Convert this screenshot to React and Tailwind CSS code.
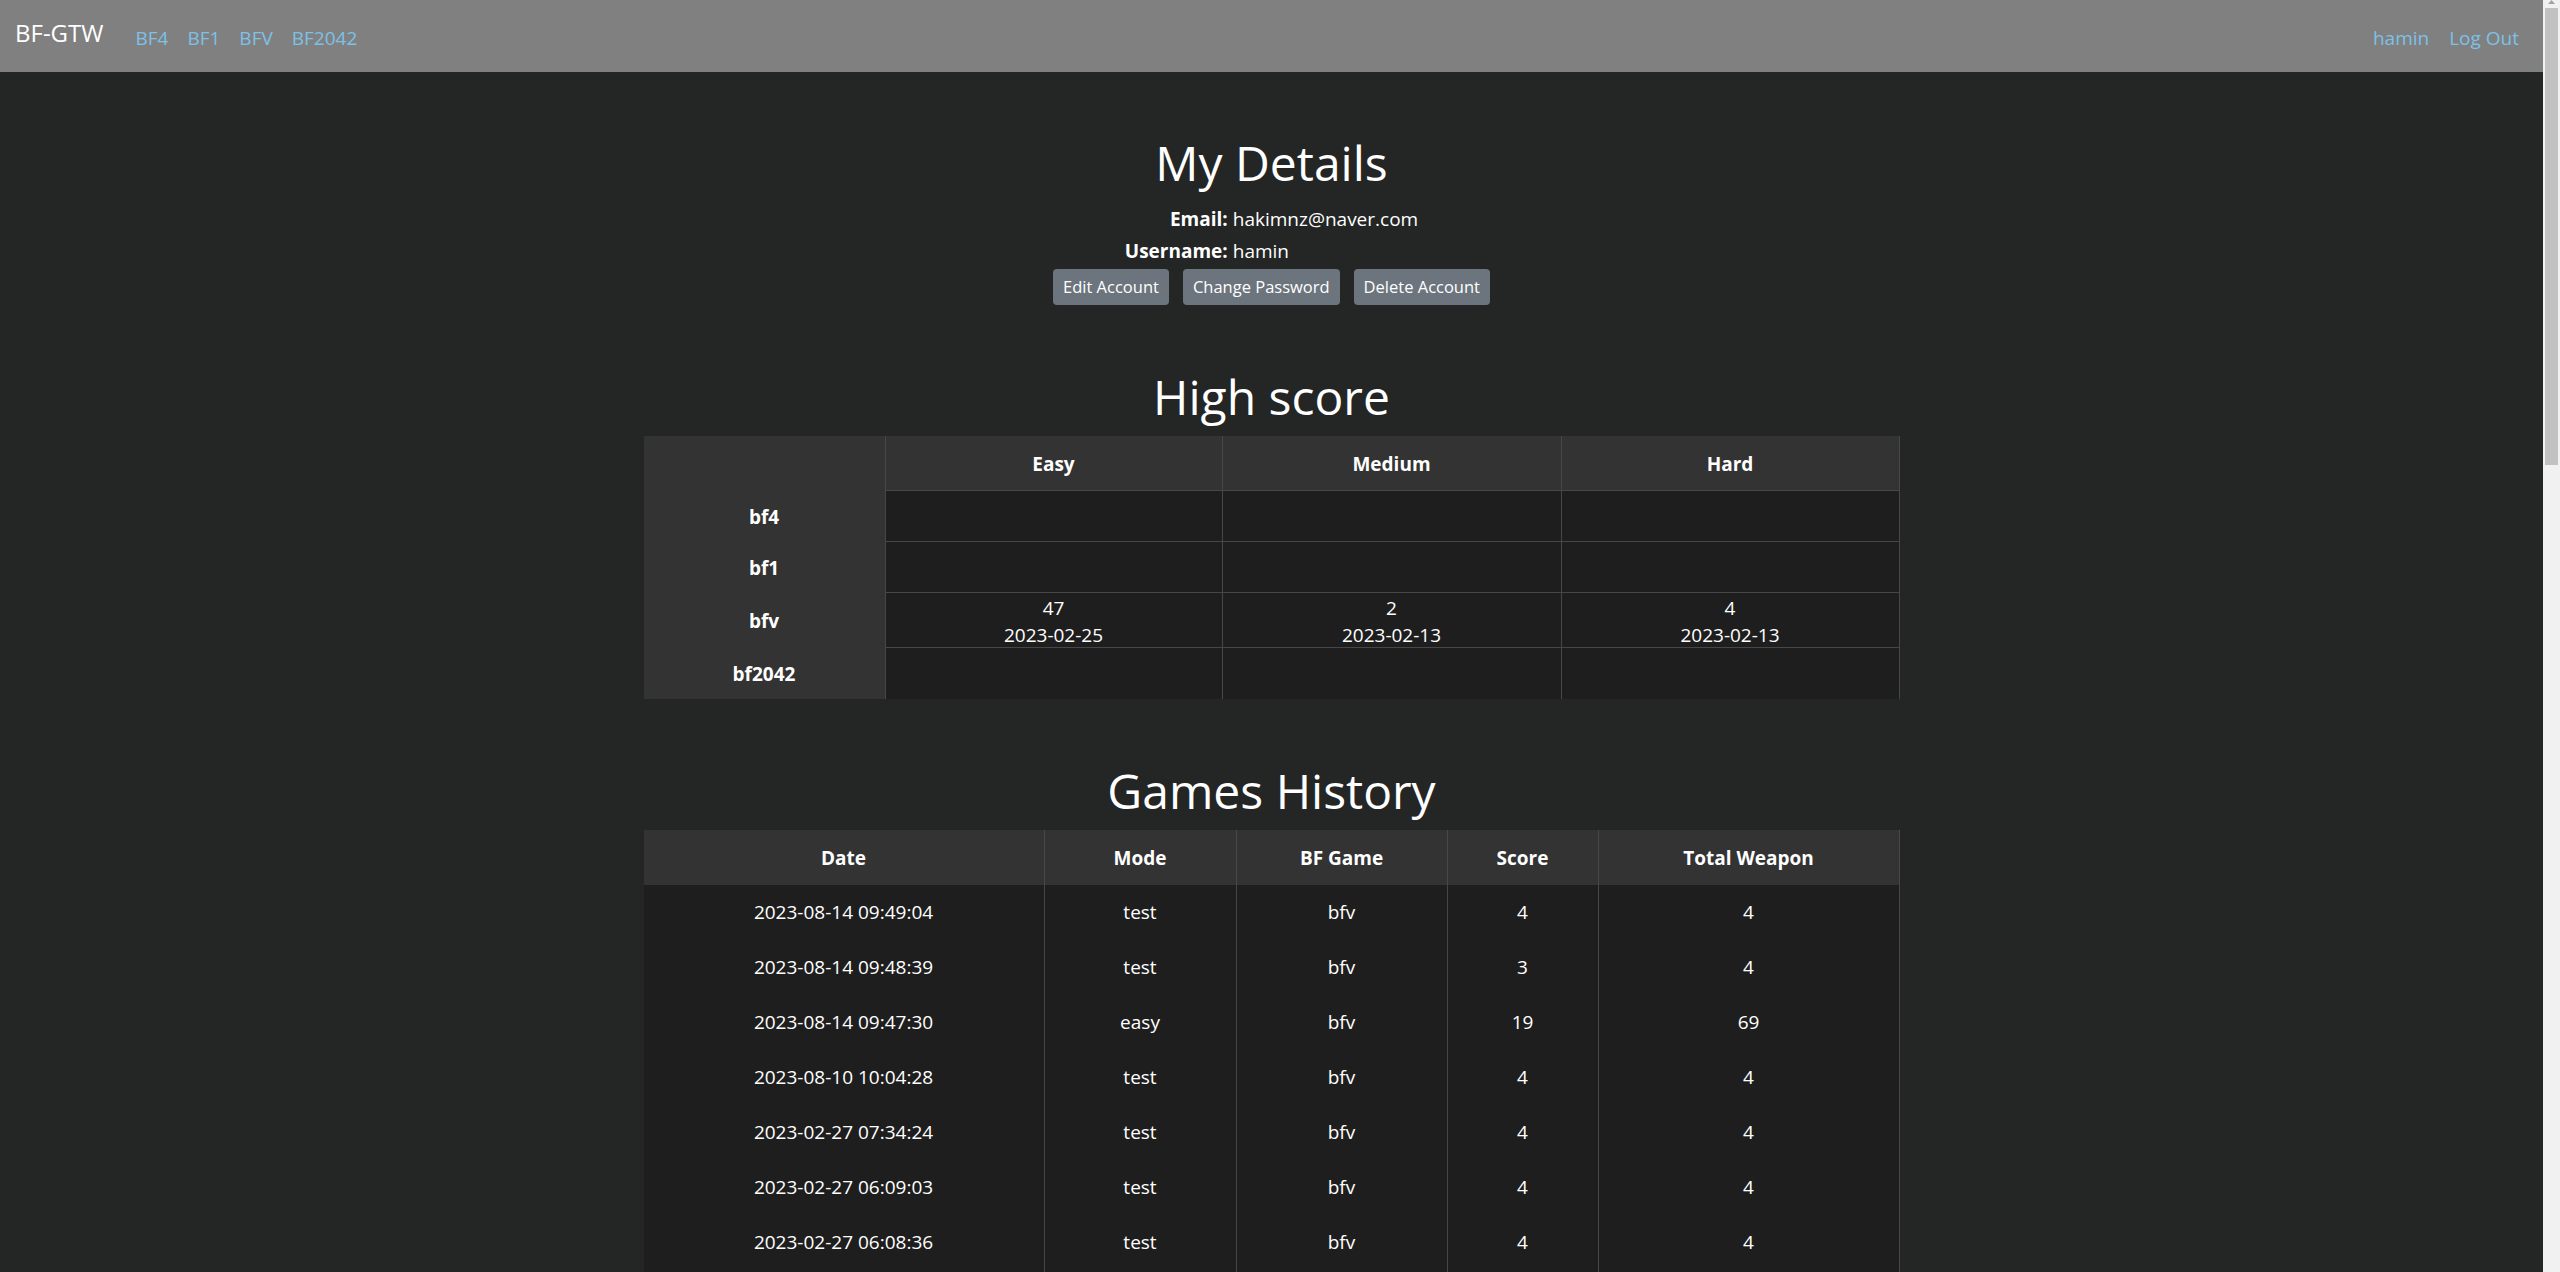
import React from 'react';

const navLinks = ['BF4', 'BF1', 'BFV', 'BF2042'];

const highScores = [
  { game: 'bf4', easy: null, medium: null, hard: null },
  { game: 'bf1', easy: null, medium: null, hard: null },
  {
    game: 'bfv',
    easy: { score: 47, date: '2023-02-25' },
    medium: { score: 2, date: '2023-02-13' },
    hard: { score: 4, date: '2023-02-13' },
  },
  { game: 'bf2042', easy: null, medium: null, hard: null },
];

const history = [
  ['2023-08-14 09:49:04', 'test', 'bfv', 4, 4],
  ['2023-08-14 09:48:39', 'test', 'bfv', 3, 4],
  ['2023-08-14 09:47:30', 'easy', 'bfv', 19, 69],
  ['2023-08-10 10:04:28', 'test', 'bfv', 4, 4],
  ['2023-02-27 07:34:24', 'test', 'bfv', 4, 4],
  ['2023-02-27 06:09:03', 'test', 'bfv', 4, 4],
  ['2023-02-27 06:08:36', 'test', 'bfv', 4, 4],
  ['2023-02-27 06:07:51', 'test', 'bfv', 4, 4],
  ['2023-02-25 11:20:13', 'easy', 'bfv', 47, 69],
  ['2023-02-13 08:41:02', 'hard', 'bfv', 4, 69],
];

function Navbar() {
  return (
    <nav className="flex h-[72px] items-center bg-[#808080] pl-[15px] pr-[24px]">
      <a className="mb-[6px] text-[24px] leading-none text-white">BF-GTW</a>
      <div className="ml-[32px] mt-[4px] flex gap-[19px]">
        {navLinks.map(l => (
          <a key={l} className="text-[19px] leading-none text-[#7dc1e6]">{l}</a>
        ))}
      </div>
      <div className="ml-auto mt-[4px] flex gap-[20px]">
        <a className="text-[19px] leading-none text-[#7dc1e6]">hamin</a>
        <a className="text-[19px] leading-none text-[#7dc1e6]">Log Out</a>
      </div>
    </nav>
  );
}

function MyDetails() {
  return (
    <>
      <h1 className="mt-[62px] text-[48px] font-normal leading-[58px]">My Details</h1>
      <div className="mt-[11px] grid grid-cols-[auto_auto] gap-x-[5px] leading-[32px]">
        <span className="text-right font-bold">Email:</span>
        <span>hakimnz@naver.com</span>
        <span className="text-right font-bold">Username:</span>
        <span>hamin</span>
      </div>
      <div className="mt-[2px] flex gap-[14px]">
        {['Edit Account', 'Change Password', 'Delete Account'].map(b => (
          <button key={b} className="h-[36px] rounded-[4px] bg-[#6c757d] px-[10px] text-[16.5px] text-white">
            {b}
          </button>
        ))}
      </div>
    </>
  );
}

function HighScore() {
  return (
    <>
      <h1 className="mt-[63px] text-[48px] font-normal leading-[58px]">High score</h1>
      <div className="mt-[10px] grid w-[1256px] grid-cols-[241px_337px_339px_339px]">
        <div className="h-[55px] bg-[#333333]" />
        {['Easy', 'Medium', 'Hard'].map((d, i) => (
          <div
            key={d}
            className={`flex h-[55px] items-center justify-center border-b border-l border-[#474747] bg-[#333333] pt-[3px] font-bold ${i === 2 ? 'border-r' : ''}`}
          >
            {d}
          </div>
        ))}
        {highScores.map((row, r) => {
          const last = r === highScores.length - 1;
          const tall = row.easy ? 'h-[55px]' : 'h-[51px]';
          return (
            <React.Fragment key={row.game}>
              <div className={`flex ${tall} items-center justify-center bg-[#333333] pt-[2px] font-bold`}>{row.game}</div>
              {[row.easy, row.medium, row.hard].map((c, i) => (
                <div
                  key={i}
                  className={`flex ${tall} flex-col items-center justify-center border-l border-[#474747] bg-[#1e1e1e] pt-[3px] leading-[27px] ${last ? '' : 'border-b'} ${i === 2 ? 'border-r' : ''}`}
                >
                  {c && (
                    <>
                      <span>{c.score}</span>
                      <span>{c.date}</span>
                    </>
                  )}
                </div>
              ))}
            </React.Fragment>
          );
        })}
      </div>
    </>
  );
}

function GamesHistory() {
  const heads = ['Date', 'Mode', 'BF Game', 'Score', 'Total Weapon'];
  return (
    <>
      <h1 className="mt-[63px] text-[48px] font-normal leading-[58px]">Games History</h1>
      <div className="mt-[10px] grid w-[1256px] grid-cols-[400px_192px_211px_151px_302px]">
        {heads.map((h, i) => (
          <div
            key={h}
            className={`flex h-[55px] items-center justify-center border-[#474747] bg-[#333333] pt-[1px] font-bold ${i > 0 ? 'border-l' : ''} ${i === 4 ? 'border-r' : ''}`}
          >
            {h}
          </div>
        ))}
        {history.map((row, r) =>
          row.map((v, i) => (
            <div
              key={`${r}-${i}`}
              className={`flex h-[55px] items-center justify-center border-[#474747] bg-[#1e1e1e] ${i > 0 ? 'border-l' : ''} ${i === 4 ? 'border-r' : ''}`}
            >
              {v}
            </div>
          ))
        )}
      </div>
    </>
  );
}

function Scrollbar() {
  return (
    <div className="flex w-[17px] shrink-0 flex-col items-center bg-[#f1f1f1]">
      <svg width="9" height="4" viewBox="0 0 9 4" className="block">
        <path d="M1 4 L4.5 0 L8 4 Z" fill="#a3a3a3" />
      </svg>
      <div className="mt-[4px] h-[457px] w-[13px] bg-[#c1c1c1]" />
    </div>
  );
}

export default function App() {
  return (
    <div className="flex h-screen overflow-hidden bg-[#242626] font-['Open_Sans',sans-serif] text-[19px] text-white">
      <div className="min-w-0 flex-1 overflow-hidden">
        <Navbar />
        <main className="flex flex-col items-center">
          <MyDetails />
          <HighScore />
          <GamesHistory />
        </main>
      </div>
      <Scrollbar />
    </div>
  );
}
